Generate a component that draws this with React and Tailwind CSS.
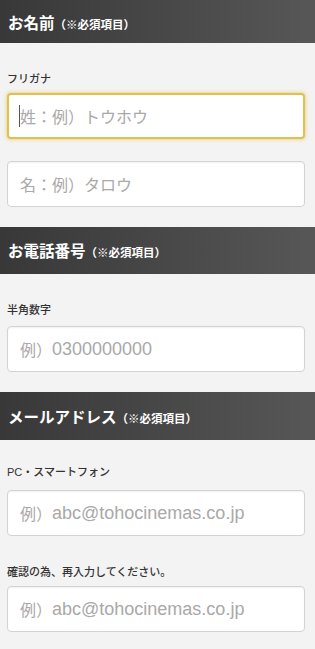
import React from "react";

const font = { fontFamily: '"Liberation Sans", "Noto Sans CJK JP", sans-serif' };
const cjk = { fontFamily: '"Noto Sans CJK JP", sans-serif' };

function Header({ title, h }) {
  return (
    <div
      className={`flex items-center pl-[8px] bg-gradient-to-r from-[#383838] to-[#575757] text-white font-bold ${h}`}
      style={cjk}
    >
      <div className="leading-none">
        <span className="text-[15.5px]">{title}</span>
        <span className="text-[11.5px]">（※必須項目）</span>
      </div>
    </div>
  );
}

function Label({ children, cls }) {
  return (
    <div className={`text-[11px] leading-[16px] text-[#333] font-medium ${cls}`} style={font}>
      {children}
    </div>
  );
}

function Field({ jp, latin, focused, cls }) {
  return (
    <div
      className={
        "relative flex items-center w-full h-[46px] rounded-[4px] bg-white text-[#a9a9a9] whitespace-nowrap " +
        (focused
          ? "border-2 border-[#e3bf4f] shadow-[0_0_4px_rgba(226,186,70,0.7)] pl-[11px] "
          : "border border-[#d3d3d3] shadow-[inset_0_1px_2px_rgba(0,0,0,0.06)] pl-[12px] ") +
        (cls || "")
      }
    >
      <span className="text-[16px] leading-none" style={cjk}>{jp}</span>
      {latin && (
        <span className="text-[18px] leading-none" style={{ fontFamily: '"Liberation Sans", Arial, sans-serif' }}>
          {latin}
        </span>
      )}
      {focused && <span className="absolute left-[10px] top-[10px] w-[1px] h-[22px] bg-[#555]" />}
    </div>
  );
}

export default function App() {
  return (
    <div className="w-[315px] h-[649px] bg-[#f3f3f3] overflow-hidden" style={font}>
      <Header title="お名前" h="h-[43px] pt-[1px]" />
      <div className="pl-[7px] pr-[10px] pt-[28px] pb-[20px]">
        <Label cls="mb-[6px]">フリガナ</Label>
        <Field jp="姓：例）トウホウ" focused cls="mb-[22px]" />
        <Field jp="名：例）タロウ" />
      </div>

      <Header title="お電話番号" h="h-[47px]" />
      <div className="pl-[7px] pr-[10px] pt-[28px] pb-[20px]">
        <Label cls="mb-[8px]">半角数字</Label>
        <Field jp="例）" latin="0300000000" />
      </div>

      <Header title="メールアドレス" h="h-[48px]" />
      <div className="pl-[7px] pr-[10px] pt-[24px]">
        <Label cls="mb-[10px]">PC・スマートフォン</Label>
        <Field jp="例）" latin="abc@tohocinemas.co.jp" cls="mb-[28px]" />
        <Label cls="mb-[6px]">確認の為、再入力してください。</Label>
        <Field jp="例）" latin="abc@tohocinemas.co.jp" />
      </div>
    </div>
  );
}
